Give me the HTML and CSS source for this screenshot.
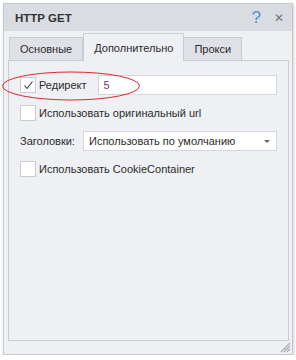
FILE: index.html
```html
<!DOCTYPE html>
<html lang="ru">

<head>
    <meta charset="UTF-8">
    <meta name="viewport" content="width=device-width, initial-scale=1.0">
    <title>HTTP GET</title>
    <link rel="stylesheet" href="styles.css">
</head>

<body>
    <div class="dialog">
        <div class="titlebar">
            <span class="title">HTTP GET</span>
            <span class="help">?</span>
            <span class="close">&#x2715;</span>
        </div>

        <div class="tabs">
            <div class="tab">Основные</div>
            <div class="tab active">Дополнительно</div>
            <div class="tab">Прокси</div>
        </div>

        <div class="panel">
            <div class="row">
                <span class="check checked">
                    <svg width="11" height="11" viewBox="0 0 11 11">
                        <path d="M1.5 5.5 L4 8.5 L9.5 1.5" fill="none" stroke="#333" stroke-width="1.1"/>
                    </svg>
                </span>
                <span class="label">Редирект</span>
                <div class="field redirect">5</div>
            </div>
            <div class="row">
                <span class="check"></span>
                <span class="label">Использовать оригинальный url</span>
            </div>
            <div class="row">
                <span class="caption">Заголовки:</span>
                <div class="field select">
                    Использовать по умолчанию
                    <span class="arrow"></span>
                </div>
            </div>
            <div class="row">
                <span class="check"></span>
                <span class="label">Использовать CookieContainer</span>
            </div>
        </div>

        <svg class="grip" width="13" height="13" viewBox="0 0 13 13">
            <path d="M12 3 L3 12 M12 6 L6 12 M12 9 L9 12" stroke="#a9adb4" stroke-width="1.2"/>
        </svg>

        <!-- red mark around the redirect option -->
        <svg class="mark" width="142" height="32" viewBox="0 0 142 32">
            <ellipse cx="70" cy="16" rx="68.5" ry="14" fill="none" stroke="#e5242a" stroke-width="1"/>
        </svg>
    </div>
</body>

</html>
```

FILE: styles.css
```css
* {
    box-sizing: border-box;
}

body {
    margin: 0;
    background: #ffffff;
    font-family: 'Liberation Sans', Arial, sans-serif;
    font-size: 11px;
    color: #2b2b2b;
}

.dialog {
    position: relative;
    margin: 3px 0 0 3px;
    width: 290px;
    height: 352px;
    background: #eff0f4;
    border: 1px solid #c4c8cf;
    box-shadow: 1px 2px 3px rgba(0, 0, 0, 0.18);
}

.titlebar {
    display: flex;
    align-items: center;
    height: 27px;
    padding: 0 8px 0 11px;
    background: #d9dce1;
}

.title {
    flex: 1;
    font-weight: bold;
    font-size: 11.5px;
    color: #333;
}

.help {
    color: #4b8fe0;
    font-size: 17px;
    margin-right: 13px;
}

.close {
    color: #777;
    font-size: 12px;
}

.tabs {
    display: flex;
    align-items: flex-end;
    height: 29px;
    padding-left: 5px;
}

.tab {
    height: 23px;
    padding: 5px 10px 0;
    background: #dfe1e6;
    border: 1px solid #c9ccd2;
    border-bottom: none;
    color: #2b2b2b;
}

.tab + .tab {
    border-left: none;
}

.tab.active {
    height: 28px;
    padding-top: 8px;
    background: #eff0f4;
    border-left: 1px solid #c9ccd2;
    margin-bottom: -1px;
    position: relative;
}

.tab.active + .tab {
    border-left: none;
}

.panel {
    height: 281px;
    margin: 0 3px 0 4px;
    padding: 14px 11px 0 11px;
    border: 1px solid #c9ccd2;
}

.row {
    display: flex;
    align-items: center;
    height: 20px;
    margin-bottom: 8px;
}

.check {
    display: flex;
    align-items: center;
    justify-content: center;
    width: 16px;
    height: 16px;
    background: #fff;
    border: 1px solid #c8ccd3;
}

.label {
    margin-left: 3px;
}

.caption {
    width: 63px;
}

.field {
    height: 20px;
    background: #fff;
    border: 1px solid #d3d6dc;
    padding: 3px 5px 0;
}

.redirect {
    margin-left: 11px;
    flex: 1;
    color: #8a2d8d;
}

.select {
    flex: 1;
    position: relative;
}

.arrow {
    position: absolute;
    right: 6px;
    top: 8px;
    border-left: 3px solid transparent;
    border-right: 3px solid transparent;
    border-top: 3px solid #666;
}

.grip {
    position: absolute;
    right: 1px;
    bottom: 1px;
}

.mark {
    position: absolute;
    left: -3px;
    top: 66px;
}
```
